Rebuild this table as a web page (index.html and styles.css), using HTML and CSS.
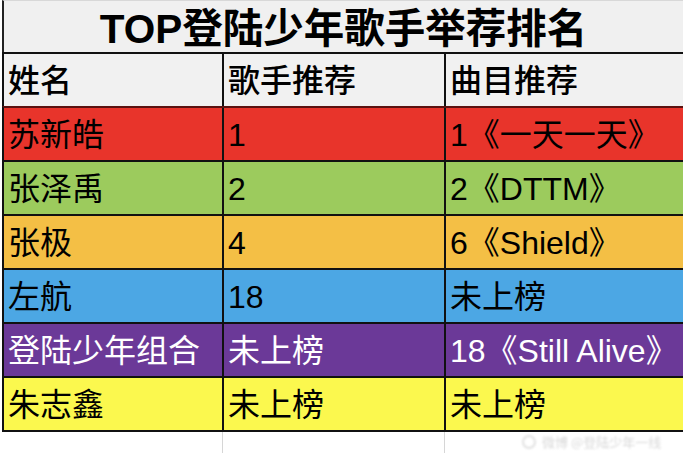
FILE: index.html
```html
<!DOCTYPE html>
<html lang="zh-CN">
<head>
<meta charset="utf-8">
<title>TOP登陆少年歌手举荐排名</title>
<link rel="stylesheet" href="styles.css">
</head>
<body>
<div class="sheet">
  <div class="title">TOP登陆少年歌手举荐排名</div>
  <div class="row head"><div class="cell">姓名</div><div class="cell">歌手推荐</div><div class="cell">曲目推荐</div></div>
  <div class="row red"><div class="cell">苏新皓</div><div class="cell">1</div><div class="cell">1《一天一天》</div></div>
  <div class="row green"><div class="cell">张泽禹</div><div class="cell">2</div><div class="cell">2《DTTM》</div></div>
  <div class="row orange"><div class="cell">张极</div><div class="cell">4</div><div class="cell">6《Shield》</div></div>
  <div class="row blue"><div class="cell">左航</div><div class="cell">18</div><div class="cell">未上榜</div></div>
  <div class="row purple"><div class="cell">登陆少年组合</div><div class="cell">未上榜</div><div class="cell">18《Still Alive》</div></div>
  <div class="row yellow"><div class="cell">朱志鑫</div><div class="cell">未上榜</div><div class="cell">未上榜</div></div>
  <div class="row empty"><div class="cell"></div><div class="cell"></div><div class="cell"></div></div>
  <div class="watermark"><span class="wm-logo"></span><span class="wm-text">微博 @登陆少年一线</span></div>
</div>
</body>
</html>
```
FILE: styles.css
```css
html, body {
  margin: 0;
  padding: 0;
  background: #ffffff;
}
body {
  width: 683px;
  height: 453px;
  overflow: hidden;
  font-family: "Liberation Sans", "Noto Sans CJK SC", sans-serif;
  color: #000;
}
.sheet {
  position: relative;
  width: 683px;
  height: 453px;
  padding-left: 2px;
  box-sizing: border-box;
  overflow: hidden;
}
.title {
  height: 52px;
  background: #f0f0f0;
  border-left: 2px solid #222;
  border-top: 1px solid #d8d8d8;
  box-sizing: border-box;
  font-weight: bold;
  font-size: 40.5px;
  line-height: 52px;
  text-align: center;
  padding-top: 2px;
}
.row {
  display: grid;
  grid-template-columns: 218px 222px 1fr;
  height: 54px;
  border-top: 2px solid #111;
  border-left: 2px solid #111;
  box-sizing: border-box;
}
.cell {
  font-size: 32px;
  line-height: 54px;
  padding-left: 4px;
  white-space: nowrap;
  overflow: hidden;
  border-left: 2px solid #111;
}
.cell:first-child {
  border-left: none;
}
.head { background: #f1f1f1; }
.head .cell { font-weight: 500; }
.red { background: #e8342b; border-top-color: #5a1210; }
.green { background: #9ccb5d; }
.orange { background: #f4bf45; }
.blue { background: #4ca7e4; }
.purple { background: #6b3998; color: #ffffff; }
.yellow { background: #fbf84e; }
.empty {
  background: #ffffff;
  border-left: none;
  padding-left: 2px;
  height: 30px;
}
.empty .cell { border-left: 1px solid #d6d6d6; }
.empty .cell:first-child { border-left: none; }
.watermark {
  position: absolute;
  left: 522px;
  top: 432px;
  display: flex;
  align-items: center;
  gap: 6px;
  filter: blur(1.2px);
  opacity: 0.55;
}
.wm-logo {
  width: 14px;
  height: 14px;
  border: 2px solid #c8c8c8;
  border-radius: 50%;
  box-sizing: border-box;
}
.wm-text {
  font-size: 13px;
  color: #b8b8b8;
  font-family: "Noto Sans CJK SC", sans-serif;
}
```
